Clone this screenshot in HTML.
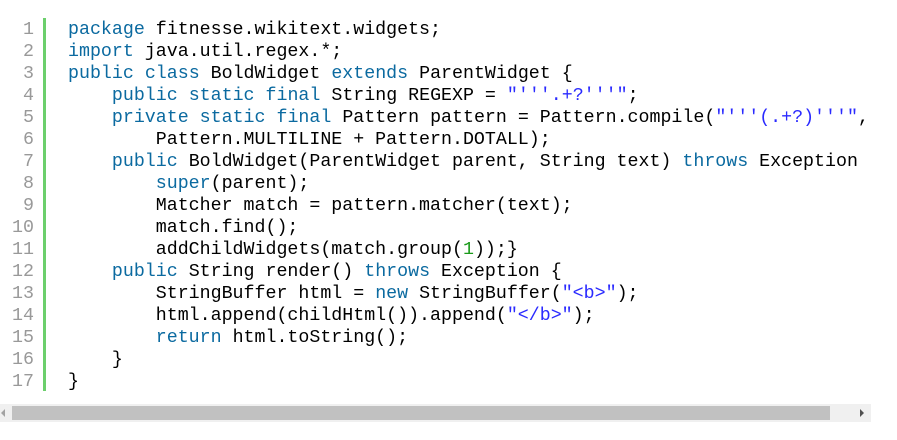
<!DOCTYPE html>
<html><head><meta charset="utf-8"><style>
body{margin:0;width:897px;height:440px;background:#fff;overflow:hidden;position:relative}
.g{position:absolute;left:0;top:19px;width:34px;text-align:right;font:18.3px/22px "Liberation Mono",monospace;color:#999}
.bar{position:absolute;left:43px;top:18px;width:3px;height:373px;background:#6ccf6c}
pre{position:absolute;left:68px;top:19px;margin:0;font:18.3px/22px "Liberation Mono",monospace;color:#000}
.k{color:#0b6aa0}
.s{color:#2a2aff}
.n{color:#1a9a1a}
.tr{position:absolute;left:0;top:404px;width:871px;height:18px;background:#f0f0f0}
.th{position:absolute;left:12px;top:406px;width:818px;height:14px;background:#c1c1c1}
.al{position:absolute;left:1px;top:409px;width:0;height:0;border-top:4px solid transparent;border-bottom:4px solid transparent;border-right:4px solid #a3a3a3}
.ar{position:absolute;left:860px;top:409px;width:0;height:0;border-top:4px solid transparent;border-bottom:4px solid transparent;border-left:4px solid #505050}
</style></head><body>
<div class="g">1<br>2<br>3<br>4<br>5<br>6<br>7<br>8<br>9<br>10<br>11<br>12<br>13<br>14<br>15<br>16<br>17</div>
<div class="bar"></div>
<pre><span class="k">package</span> fitnesse.wikitext.widgets;
<span class="k">import</span> java.util.regex.*;
<span class="k">public</span> <span class="k">class</span> BoldWidget <span class="k">extends</span> ParentWidget {
    <span class="k">public</span> <span class="k">static</span> <span class="k">final</span> String REGEXP = <span class="s">"'''.+?'''"</span>;
    <span class="k">private</span> <span class="k">static</span> <span class="k">final</span> Pattern pattern = Pattern.compile(<span class="s">"'''(.+?)'''"</span>,
        Pattern.MULTILINE + Pattern.DOTALL);
    <span class="k">public</span> BoldWidget(ParentWidget parent, String text) <span class="k">throws</span> Exception
        <span class="k">super</span>(parent);
        Matcher match = pattern.matcher(text);
        match.find();
        addChildWidgets(match.group(<span class="n">1</span>));}
    <span class="k">public</span> String render() <span class="k">throws</span> Exception {
        StringBuffer html = <span class="k">new</span> StringBuffer(<span class="s">"&lt;b&gt;"</span>);
        html.append(childHtml()).append(<span class="s">"&lt;/b&gt;"</span>);
        <span class="k">return</span> html.toString();
    }
}</pre>
<div class="tr"></div><div class="th"></div><div class="al"></div><div class="ar"></div>
</body></html>
